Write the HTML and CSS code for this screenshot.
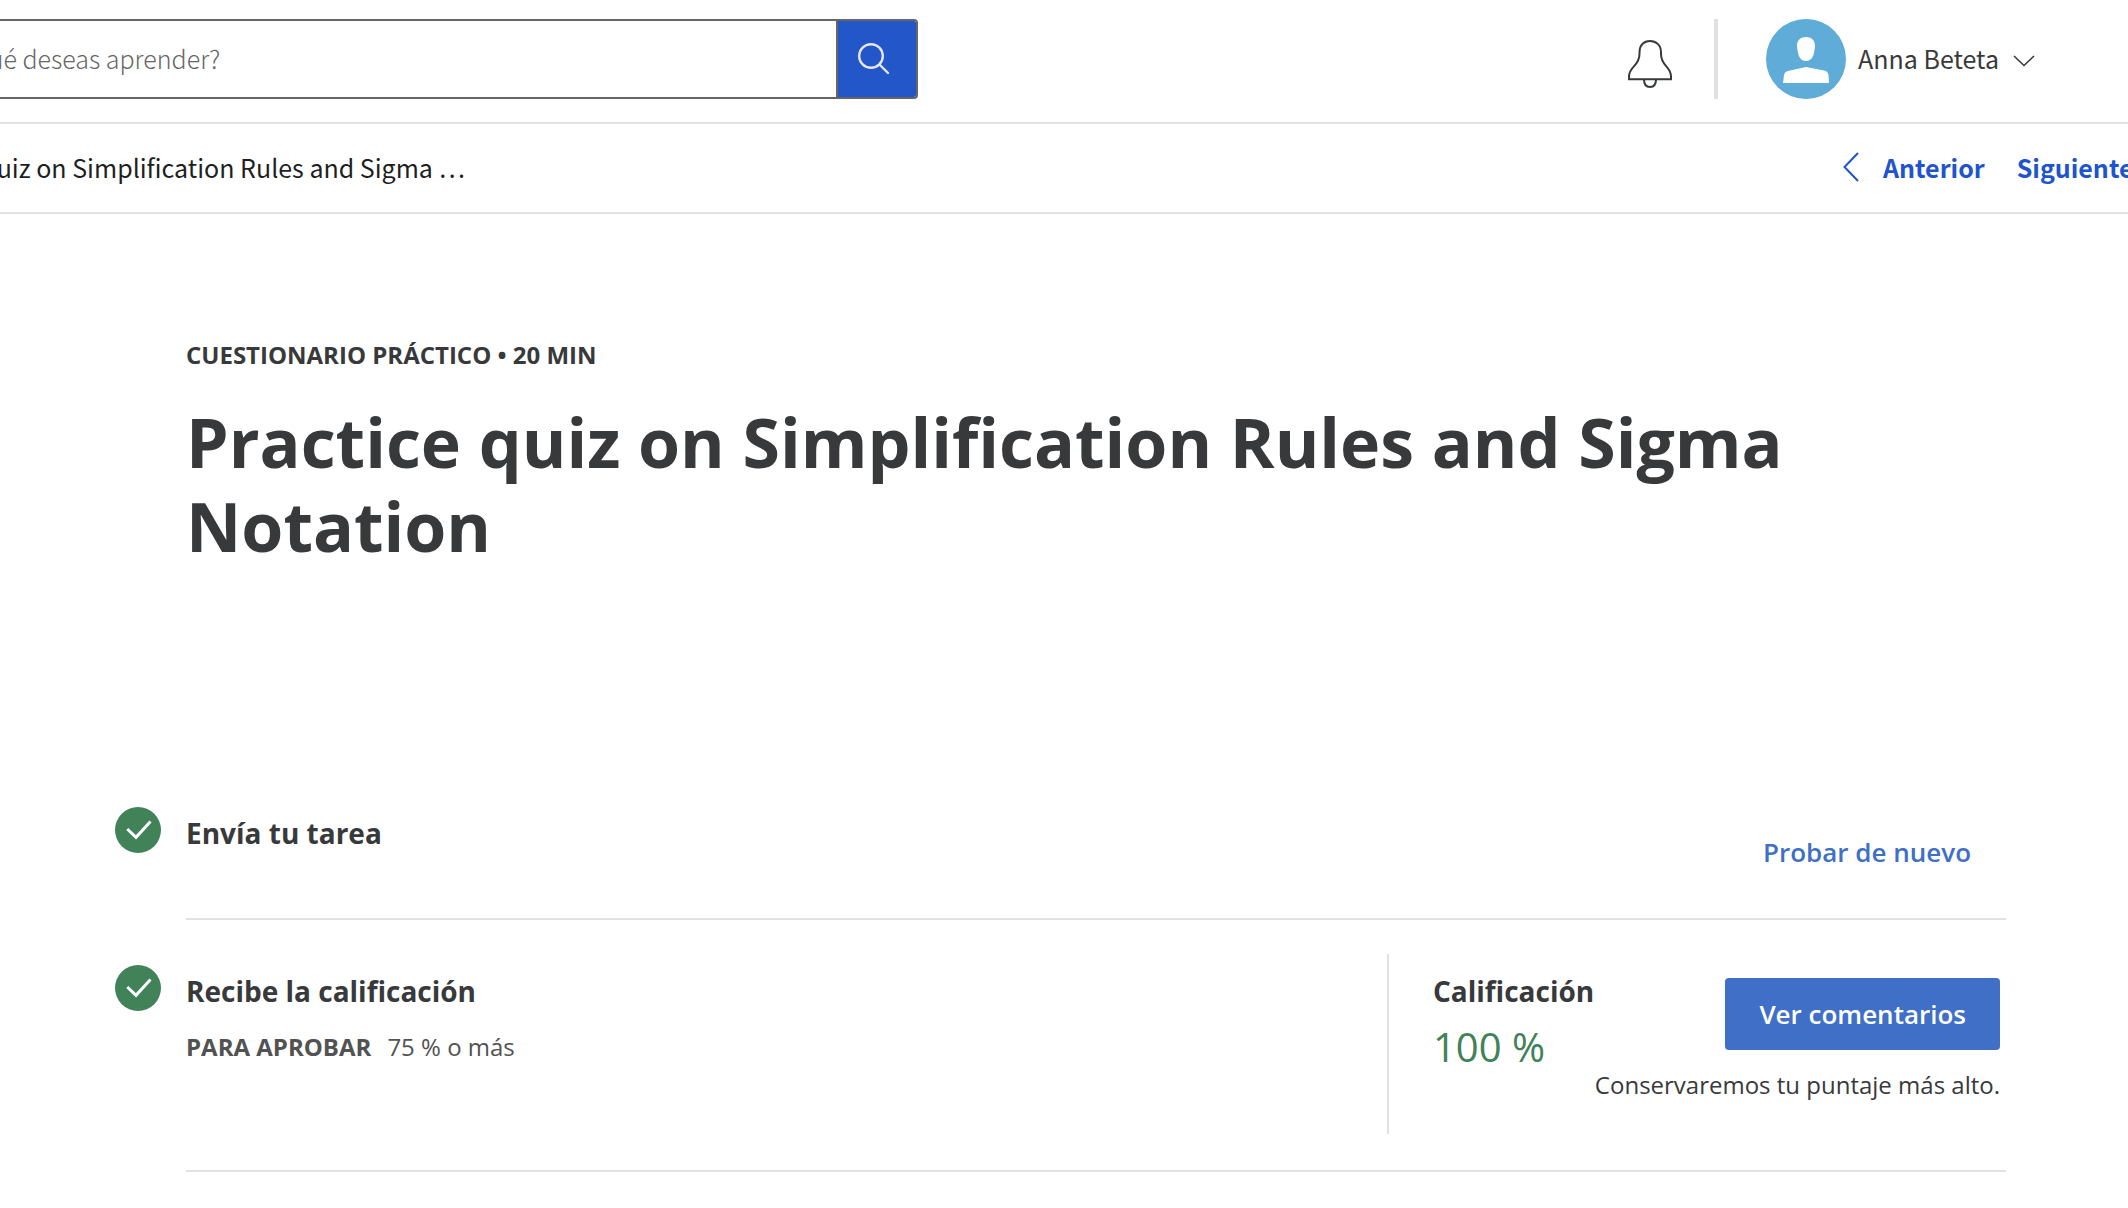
FILE: index.html
```
<!DOCTYPE html>
<html lang="es">
<head>
<meta charset="utf-8">
<meta name="viewport" content="width=device-width, initial-scale=1">
<title>Practice quiz on Simplification Rules and Sigma Notation</title>
<link rel="stylesheet" href="styles.css">
</head>
<body>
<header class="topbar">
  <form class="search" role="search">
    <input class="search-input" type="search" placeholder="¿Qué deseas aprender?" aria-label="Buscar">
    <button class="search-button" type="button" aria-label="Buscar">
      <svg width="32" height="32" viewBox="0 0 32 32" fill="none" stroke="#e5e7ea" stroke-width="2.4" stroke-linecap="round"><circle cx="13" cy="13" r="11.8"/><path d="M21.5 21.5 30 30"/></svg>
    </button>
  </form>
  <div class="account">
    <button class="icon-button" type="button" aria-label="Notificaciones">
      <svg width="44" height="48" viewBox="0 0 44 48" fill="none" stroke="#373a3c" stroke-width="2"><path d="M1 39.300V36.500C1 26 11.500 26.500 11.500 14V12C11.500 5 16 1 22 1S33 5 33 12V14C33 26.500 43 26 43 36.500V39.300Z"/><path d="M16 39.500C16 44.500 18.500 47 22 47S28 44.500 28 39.500"/></svg>
    </button>
    <span class="separator"></span>
    <button class="profile" type="button">
      <svg width="80" height="80" viewBox="0 0 80 80"><circle cx="40" cy="40" r="40" fill="#5eacd7"/><path fill="#fff" d="M40 18C46 18 49.500 22 49 28L48 34C47 39 44 42 40 42S33 39 32 34L31 28C30.500 22 34 18 40 18ZM17 64 18 56C18.500 53.500 20 52.500 22 52L40 48 58 51.500C60.500 52 62 53.500 62.500 56L63 64Z"/></svg>
      <span class="profile-name">Anna Beteta</span>
      <svg class="caret" width="22" height="12" viewBox="0 0 22 12" fill="none" stroke="#373a3c" stroke-width="1.600"><path d="M1 1 11 10.500 21 1"/></svg>
    </button>
  </div>
</header>
<nav class="item-nav">
  <div class="crumb"><span>Practice quiz on Simplification Rules and Sigma …</span></div>
  <div class="pager">
    <a class="pager-link" href="#anterior">
      <svg width="16" height="30" viewBox="0 0 16 30" fill="none" stroke="#2054cc" stroke-width="2"><path d="M15 1 1.500 15 15 29"/></svg>
      Anterior</a>
    <a class="pager-link" href="#siguiente">Siguiente</a>
  </div>
</nav>
<main class="quiz">
  <div class="intro">
    <p class="eyebrow">CUESTIONARIO PRÁCTICO • 20 MIN</p>
    <h1 class="title">Practice quiz on Simplification Rules and Sigma Notation</h1>
  </div>
  <section class="step">
    <svg class="check" width="46" height="46" viewBox="0 0 46 46"><circle cx="23" cy="23" r="23" fill="#418259"/><path d="M12.300 22 21 30.300 35.500 14.500" fill="none" stroke="#fff" stroke-width="3"/></svg>
    <div class="step-body">
      <h2 class="heading">Envía tu tarea</h2>
      <button class="text-button" type="button">Probar de nuevo</button>
    </div>
  </section>
  <section class="step">
    <svg class="check" width="46" height="46" viewBox="0 0 46 46"><circle cx="23" cy="23" r="23" fill="#418259"/><path d="M12.300 22 21 30.300 35.500 14.500" fill="none" stroke="#fff" stroke-width="3"/></svg>
    <div class="step-body graded">
      <div class="requirement">
        <h2 class="heading">Recibe la calificación</h2>
        <p class="pass"><strong class="pass-label">PARA APROBAR</strong><span>75 % o más</span></p>
      </div>
      <div class="result">
        <div class="grade">
          <h2 class="heading">Calificación</h2>
          <p class="score">100 %</p>
        </div>
        <div class="feedback">
          <button class="primary-button" type="button">Ver comentarios</button>
          <p class="note">Conservaremos tu puntaje más alto.</p>
        </div>
      </div>
    </div>
  </section>
</main>
</body>
</html>
```
FILE: styles.css
```
* {
  box-sizing: border-box;
}

body {
  margin: 0;
  overflow-x: hidden;
  background: #fff;
  color: #38393b;
  font-family: "Open Sans", sans-serif;
  font-size: 24px;
  line-height: 36px;
}

h1, h2, p {
  margin: 0;
}

button {
  padding: 0;
  border: 0;
  background: none;
  color: inherit;
  font: inherit;
  cursor: pointer;
}

svg {
  display: block;
  flex: none;
}

.topbar,
.item-nav {
  display: flex;
  align-items: center;
  justify-content: space-between;
  border-bottom: 2px solid #e1e1e1;
  font-family: "Noto Sans CJK SC", sans-serif;
  font-size: 25px;
}

.topbar {
  padding: 19px 93px 23px 0;
}

.search {
  display: flex;
  flex: 0 1 978px;
  height: 80px;
  margin-left: -60px;
  border: 2px solid #666;
  border-radius: 4px;
  overflow: hidden;
}

.search-input {
  flex: 1;
  min-width: 0;
  padding: 0 18px 2px;
  border: 0;
  outline: 0;
  background: #fff;
  font: inherit;
}

.search-input::placeholder {
  color: #666;
  font-weight: 300;
}

.search-button {
  width: 80px;
  padding: 0 20px;
  border-left: 2px solid #666;
  background: #2356c9;
}

.account,
.profile {
  display: flex;
  align-items: center;
}

.icon-button {
  padding-top: 10px;
}

.separator {
  width: 4px;
  height: 80px;
  margin: 0 48px 0 42px;
  background: #e1e1e1;
}

.profile-name {
  margin: 0 14px 0 12px;
  padding-bottom: 2px;
}

.caret {
  margin-top: 4px;
}

.item-nav {
  height: 90px;
  padding-bottom: 2px;
  color: #1f1f1f;
}

.crumb {
  display: flex;
  justify-content: flex-end;
  width: 465px;
  overflow: hidden;
  white-space: nowrap;
}

.pager {
  display: flex;
  gap: 32px;
  width: 285px;
}

.pager-link {
  display: flex;
  align-items: center;
  gap: 24px;
  color: #2054cc;
  font-weight: 700;
  text-decoration: none;
}

.quiz {
  padding: 123px 122px 36px 115px;
}

.intro {
  padding: 0 71px 194px;
}

.eyebrow {
  margin-bottom: 27px;
  font-weight: 700;
}

.title {
  font-size: 68px;
  font-weight: 700;
  line-height: 84px;
}

.step {
  display: grid;
  grid-template-columns: 46px 1fr;
  column-gap: 25px;
}

.check {
  margin-top: 45px;
}

.step-body {
  display: flex;
  justify-content: space-between;
  min-height: 158px;
  padding-top: 53px;
  border-bottom: 2px solid #e1e1e1;
}

.heading {
  font-size: 28px;
  font-weight: 700;
  line-height: 36px;
}

.text-button {
  align-self: flex-start;
  margin: 19px 35px 0 0;
  color: #3f6fc6;
  font-size: 26px;
  font-weight: 600;
}

.graded {
  padding: 34px 0 36px;
}

.requirement,
.grade {
  padding-top: 19px;
}

.pass {
  display: flex;
  gap: 16px;
  margin-top: 20px;
  color: #525252;
}

.pass-label {
  font-weight: 700;
}

.result {
  display: flex;
  justify-content: space-between;
  width: 619px;
  height: 180px;
  padding-right: 6px;
  padding-left: 44px;
  border-left: 2px solid #e1e1e1;
}

.grade {
  width: 161px;
}

.score {
  margin-top: 14px;
  color: #418259;
  font-size: 40px;
  font-weight: 400;
  line-height: 48px;
}

.feedback {
  display: flex;
  flex-direction: column;
  align-items: flex-end;
  padding-top: 24px;
  white-space: nowrap;
}

.primary-button {
  height: 72px;
  padding: 0 34px;
  border-radius: 4px;
  background: #3f6fc6;
  color: #fff;
  font-size: 26px;
  font-weight: 600;
}

.note {
  margin-top: 17px;
}
```
